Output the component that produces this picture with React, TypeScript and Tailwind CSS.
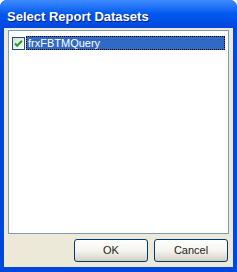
import React from "react";

const CheckIcon = () => (
  <svg width="9" height="9" viewBox="0 0 9 9">
    <path d="M1 4.5 L3.2 6.8 L8 1.8" fill="none" stroke="#21A121" strokeWidth="2" />
  </svg>
);

const XpButton = ({ label }: { label: string }) => (
  <button className="w-[74px] h-[23px] rounded-[3px] border border-[#003C74] bg-gradient-to-b from-[#FFFFFF] via-[#F5F4EF] to-[#D6D0C5] text-[11px] text-[#222] shadow-[inset_0_-1px_0_#D6D0C5]">
    {label}
  </button>
);

export default function App() {
  return (
    <div
      className="w-[237px] h-[272px] flex flex-col rounded-t-[7px] bg-[#0047DE] overflow-hidden"
      style={{ fontFamily: '"Liberation Sans", Arial, sans-serif' }}
    >
      {/* title bar */}
      <div className="h-[28px] shrink-0 flex items-center pl-[7px] pt-[5px] bg-gradient-to-b from-[#3D8BFF] via-[#0058EE] to-[#0048DE]">
        <span className="text-white font-bold text-[13px] [text-shadow:1px_1px_0_#0A1E8C]">
          Select Report Datasets
        </span>
      </div>

      {/* client area */}
      <div className="flex-1 mx-[4px] mb-[5px] bg-[#ECE9D8] flex flex-col px-[4px] pt-[2px]">
        <div className="flex-1 bg-white border border-[#7F9DB9] pt-[5px] px-[3px]">
          <div className="flex items-center h-[14px]">
            <div className="w-[13px] h-[13px] border border-[#1C5180] bg-gradient-to-br from-[#DCDCD7] to-[#FFFFFF] flex items-center justify-center mr-[1px]">
              <CheckIcon />
            </div>
            <div className="flex-1 h-[14px] bg-[#316AC5] outline outline-1 outline-dotted outline-black -outline-offset-1 text-white text-[11px] leading-[14px] pl-[2px]">
              frxFBTMQuery
            </div>
          </div>
        </div>

        <div className="h-[33px] shrink-0 flex items-center justify-end gap-[6px] pr-[1px]">
          <XpButton label="OK" />
          <XpButton label="Cancel" />
        </div>
      </div>
    </div>
  );
}
